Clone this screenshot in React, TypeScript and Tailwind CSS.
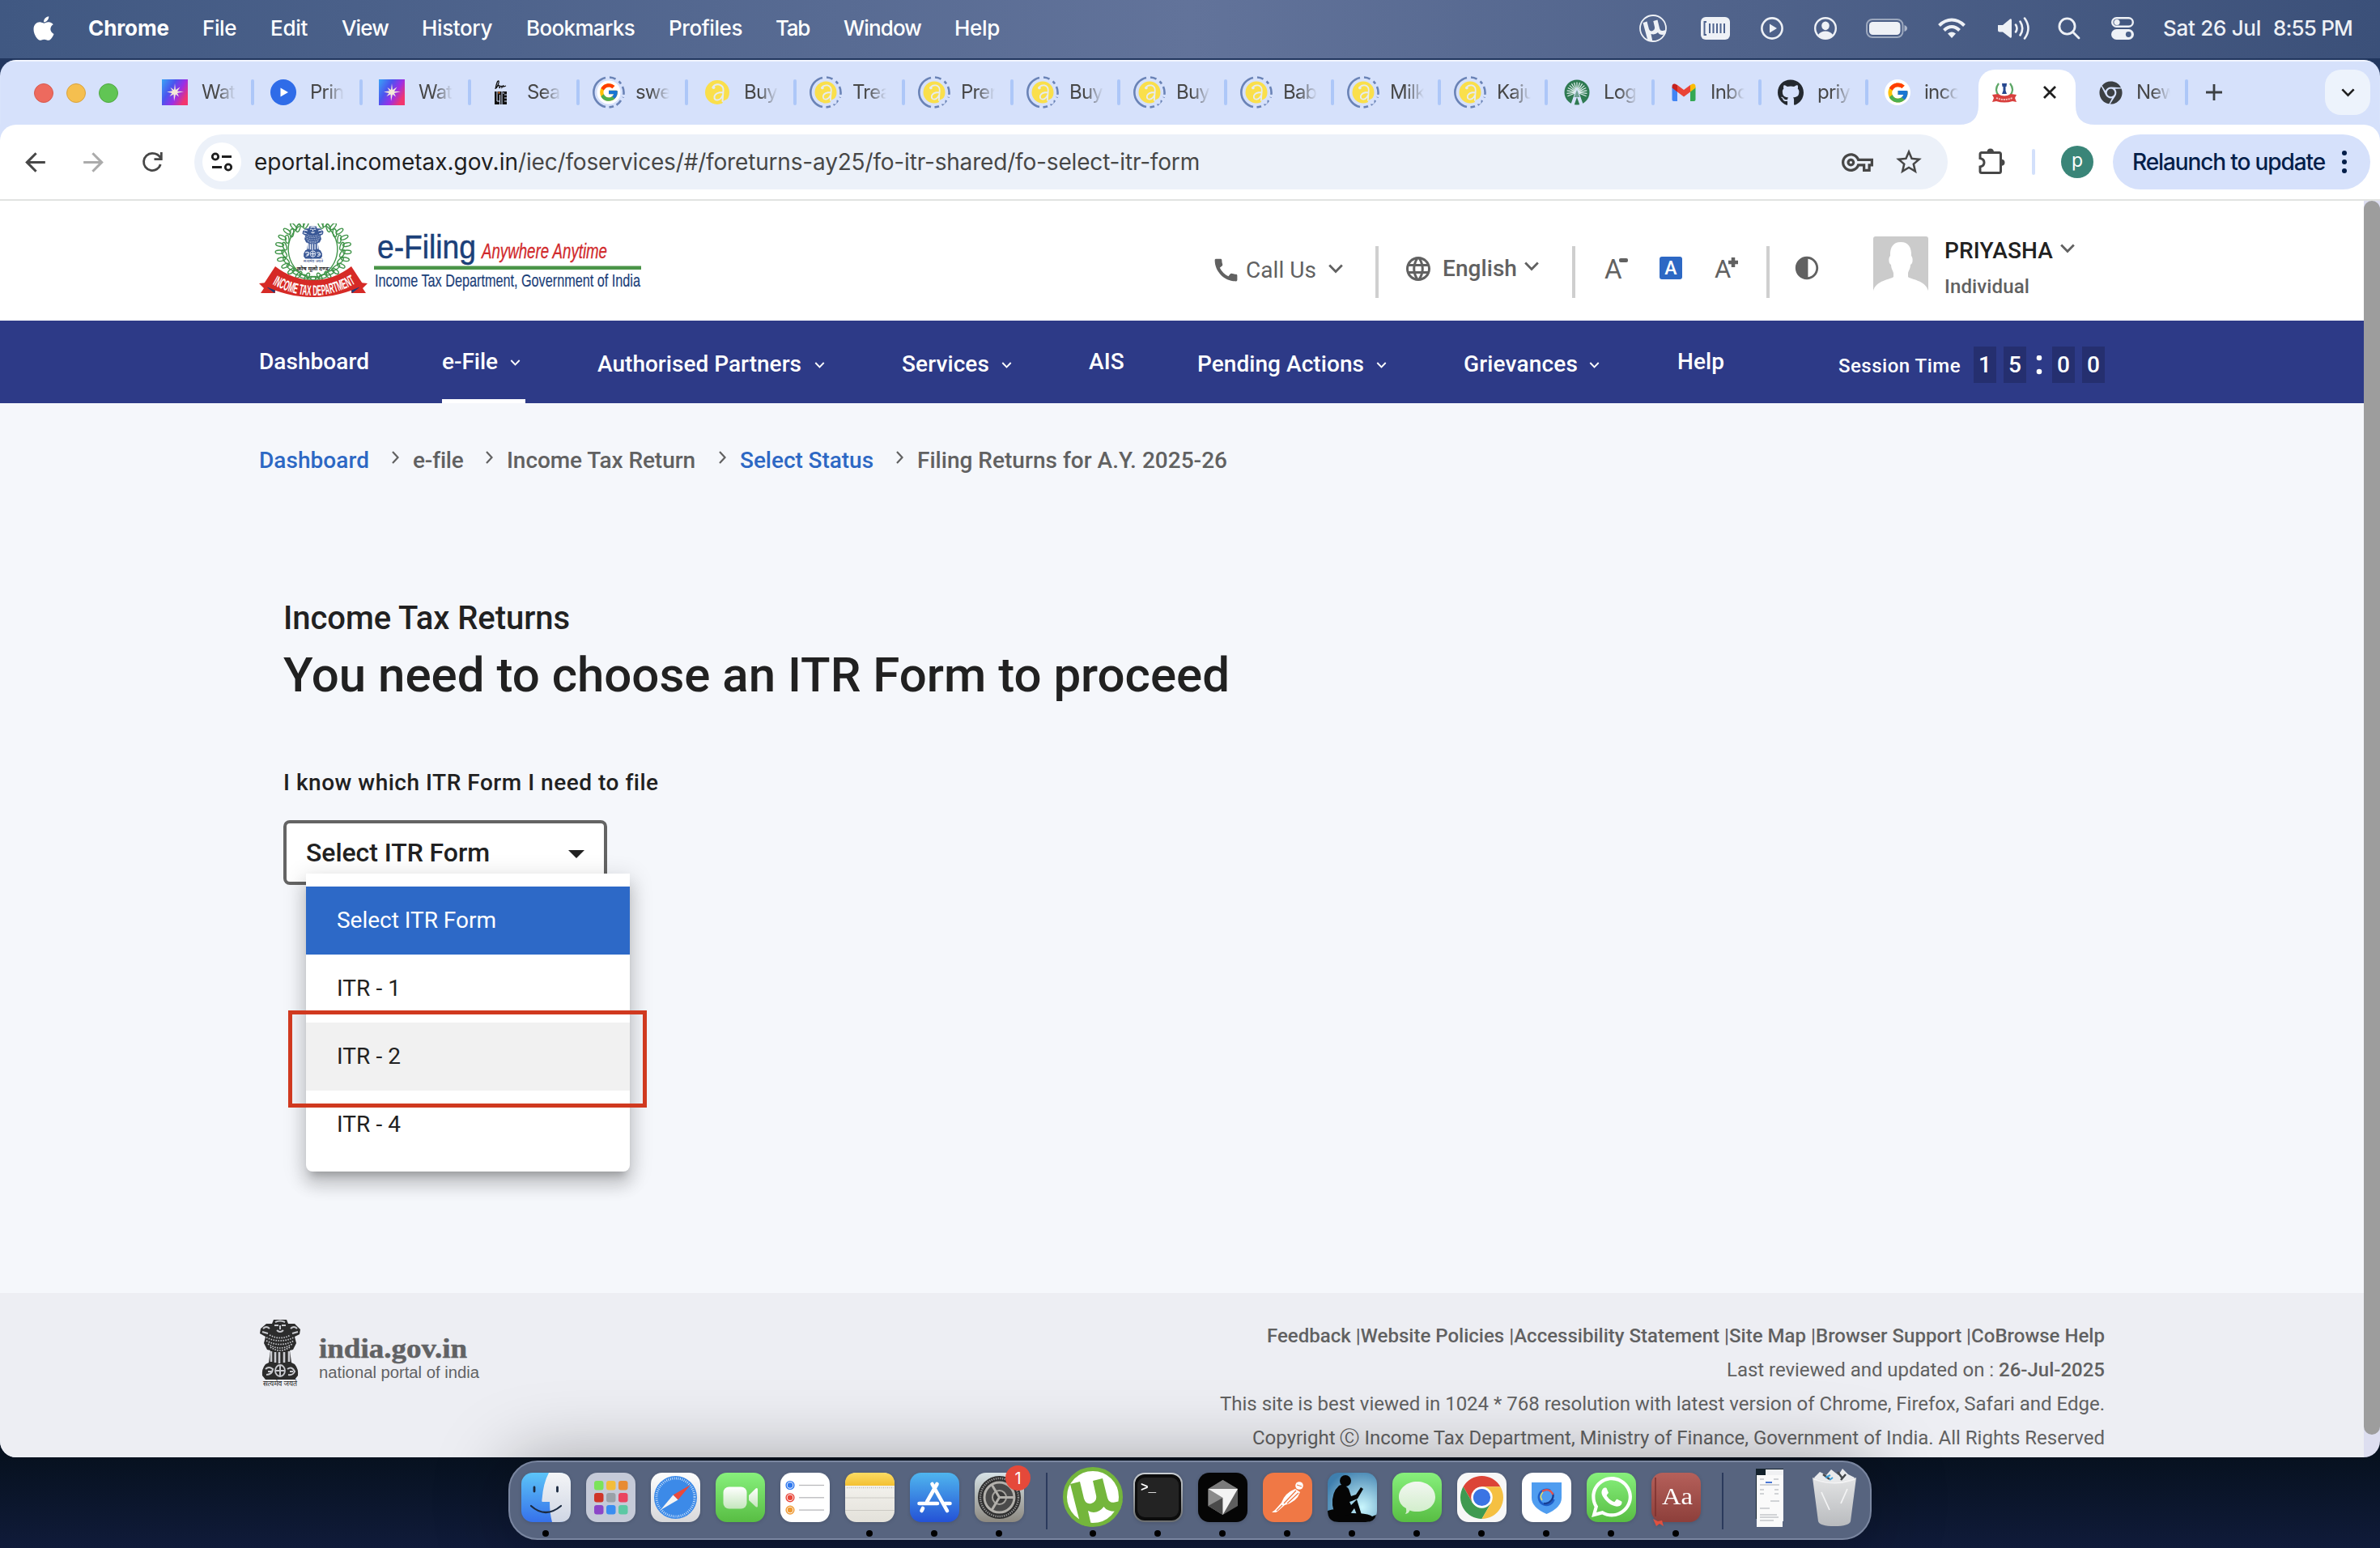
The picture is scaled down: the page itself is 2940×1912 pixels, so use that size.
import { useLayoutEffect, useRef, useState, type ReactNode } from 'react';
import { FaApple, FaChrome, FaGithub, FaWhatsapp } from 'react-icons/fa';
import { FcGoogle } from 'react-icons/fc';
import { MdArrowBack, MdArrowForward, MdCall, MdContrast, MdLanguage, MdOutlineVpnKey, MdStarBorder } from 'react-icons/md';

/** One line of text whose letter spacing is adjusted so that it fills its box. */
function Fit({ children, className = '' }: { children: string; className?: string }) {
  const box = useRef<HTMLSpanElement>(null);
  const inner = useRef<HTMLSpanElement>(null);
  const [spacing, setSpacing] = useState(0);
  useLayoutEffect(() => {
    if (!box.current || !inner.current) return;
    const free = box.current.clientWidth - inner.current.getBoundingClientRect().width;
    setSpacing(free / children.length);
  }, [children]);
  return (
    <span ref={box} className={`block shrink-0 whitespace-pre ${className}`}>
      <span ref={inner} style={{ letterSpacing: `${spacing}px` }}>{children}</span>
    </span>
  );
}

function ChevronDown({ className }: { className: string }) {
  return (
    <svg viewBox="0 0 18 12" className={`shrink-0 ${className}`} fill="none" stroke="currentColor" strokeWidth="2.8">
      <path d="M1.2 1.5 L9 9.5 L16.8 1.5" />
    </svg>
  );
}

/* ---------- macOS menu bar ---------- */

function MenuBar() {
  return (
    <div className="flex h-[72px] shrink-0 items-center bg-linear-to-r from-[#405882] via-[#62739a] to-[#3b5079] pb-[2px] pl-[40px] text-[26px] leading-[32px] text-white">
      <FaApple className="h-[34px] w-[28px] shrink-0" />
      <Fit className="ml-[41px] w-[100px] font-bold">Chrome</Fit>
      <Fit className="ml-[41px] w-[42px] font-medium">File</Fit>
      <Fit className="ml-[42px] w-[46px] font-medium">Edit</Fit>
      <Fit className="ml-[42px] w-[58px] font-medium">View</Fit>
      <Fit className="ml-[41px] w-[87px] font-medium">History</Fit>
      <Fit className="ml-[42px] w-[134px] font-medium">Bookmarks</Fit>
      <Fit className="ml-[42px] w-[91px] font-medium">Profiles</Fit>
      <Fit className="ml-[41px] w-[42px] font-medium">Tab</Fit>
      <Fit className="ml-[42px] w-[96px] font-medium">Window</Fit>
      <Fit className="ml-[41px] w-[56px] font-medium">Help</Fit>
      <div className="ml-auto flex items-center pr-[34px] text-[#eef1f6]">
        <svg viewBox="0 0 34 34" className="h-[34px] w-[34px]">
          <circle cx="17" cy="17" r="16" fill="none" stroke="currentColor" strokeWidth="1.8" />
          <path d="M4.5 10 L9.500 8.600 L12 18 Q13 21 16 20.300 Q19.500 19 19 15.500 L17.300 8 L22.500 6.600 L25.200 17.500 Q26 20.500 29 20 L33 19 L32 24.500 Q25 26 23 22 Q19.500 25.500 14.500 24 L16.500 33.500 L10.500 32 Z" fill="currentColor" />
        </svg>
        <svg viewBox="0 0 36 28" className="ml-[42px] h-[28px] w-[36px]">
          <rect width="36" height="28" rx="6" fill="currentColor" />
          <path d="M7 6 H4.5 V22 H7 M11 8 V20 M15.5 8 V20 M20 8 V20 M24.5 8 V20 M29 8 V20" stroke="#4f648f" strokeWidth="2" fill="none" />
        </svg>
        <svg viewBox="0 0 28 28" className="ml-[38px] h-[28px] w-[28px]">
          <circle cx="14" cy="14" r="12.6" fill="none" stroke="currentColor" strokeWidth="2.6" />
          <path d="M11 8.5 L20 14 L11 19.5 Z" fill="currentColor" />
        </svg>
        <svg viewBox="0 0 28 28" className="ml-[38px] h-[28px] w-[28px]">
          <circle cx="14" cy="14" r="12.8" fill="none" stroke="currentColor" strokeWidth="2.4" />
          <ellipse cx="14" cy="10.8" rx="4.8" ry="5.4" fill="currentColor" />
          <path d="M5 22 Q8 17.5 14 17.5 Q20 17.5 23 22 Q19 26.5 14 26.5 Q9 26.5 5 22" fill="currentColor" />
        </svg>
        <svg viewBox="0 0 51 24" className="ml-[36px] h-[24px] w-[51px]">
          <rect x="1" y="1" width="44.500" height="22" rx="7" fill="none" stroke="currentColor" strokeOpacity=".5" strokeWidth="2" />
          <rect x="4" y="4" width="38.500" height="16" rx="4.500" fill="currentColor" />
          <path d="M47.500 8 Q51 9.500 51 12 Q51 14.500 47.500 16 Z" fill="currentColor" opacity=".6" />
        </svg>
        <svg viewBox="0 0 34 26" className="ml-[38px] h-[26px] w-[34px]" fill="none" stroke="currentColor" strokeWidth="4">
          <path d="M1.500 9.500 Q8.500 2.500 17 2.500 Q25.500 2.500 32.500 9.500" />
          <path d="M7.500 15.500 Q12 11 17 11 Q22 11 26.500 15.500" />
          <path d="M17 25 L12 19.500 Q17 15.500 22 19.500 Z" fill="currentColor" stroke="none" />
        </svg>
        <svg viewBox="0 0 40 28" className="ml-[40px] h-[28px] w-[40px]" fill="none" stroke="currentColor" strokeWidth="2.600" strokeLinecap="round">
          <path d="M0 10 H6 L15 2.500 Q17 1.500 17 4 V24 Q17 26.500 15 25.500 L6 18.500 H2 Q0 18.500 0 16.500 Z" fill="currentColor" stroke="none" />
          <path d="M22 9.500 Q25 14 22 18.500 M27.500 5.500 Q33 14 27.500 22.500 M33 1.500 Q42 14 33 26.500" />
        </svg>
        <svg viewBox="0 0 28 28" className="ml-[34px] h-[28px] w-[28px]" fill="none" stroke="currentColor" strokeWidth="2.800" strokeLinecap="round">
          <circle cx="11.500" cy="11.500" r="9.600" />
          <path d="M18.500 18.500 L26 26" />
        </svg>
        <svg viewBox="0 0 28 28" className="ml-[38px] h-[28px] w-[28px]">
          <rect x="1.200" y="1.200" width="25.600" height="10.600" rx="5.300" fill="none" stroke="currentColor" strokeWidth="2.400" />
          <circle cx="7" cy="6.500" r="3.600" fill="currentColor" />
          <rect y="15" width="28" height="13" rx="6.500" fill="currentColor" />
          <circle cx="21.300" cy="21.500" r="3.400" fill="#4a6089" />
        </svg>
        <Fit className="ml-[36px] w-[121px] font-medium">Sat 26 Jul</Fit>
        <Fit className="ml-[15px] w-[98px] font-medium">8:55 PM</Fit>
      </div>
    </div>
  );
}

/* ---------- Chrome tab strip ---------- */

function Ring({ children }: { children: ReactNode }) {
  return (
    <svg viewBox="0 0 40 40" className="-m-[4px] h-[40px] w-[40px] max-w-none shrink-0">
      <g fill="none" stroke="#6a83b6" strokeWidth="2.600">
        <path d="M16 1.900 A18.500 18.500 0 0 0 16 38.100" />
        <path d="M21 1.500 A18.500 18.500 0 0 1 28.500 3.600" />
        <path d="M32.500 6.500 A18.500 18.500 0 0 1 35 9.500" />
        <path d="M37 13 A18.500 18.500 0 0 1 37.500 26.500" strokeDasharray="10 3 20" />
        <path d="M35 30 A18.500 18.500 0 0 1 29.500 35.700" />
        <path d="M26 37.200 A18.500 18.500 0 0 1 20.500 38.400" />
      </g>
      {children}
    </svg>
  );
}

function Amul({ ringed }: { ringed?: boolean }) {
  const glyph = (
    <>
      <circle cx="20" cy="20" r="15" fill="#fadf4b" />
      <path d="M14.500 14 Q17 9.500 22.500 10.500 Q28 12 27.500 18 L26.500 31 M27 20 Q18 20 16.500 25 Q16 30 20.500 29.500 Q24.500 29 26.500 24" fill="none" stroke="#e6ebf0" strokeWidth="2" strokeLinecap="round" />
      <circle cx="15.500" cy="14" r="2" fill="#e6ebf0" />
      <path d="M27 31 L35 27 V36 H26 Z" fill="#d6e1fb" />
    </>
  );
  return ringed ? <Ring><g transform="translate(2 2) scale(.9)">{glyph}</g></Ring> : <svg viewBox="4 4 32 32" className="h-[32px] w-[32px] shrink-0">{glyph}</svg>;
}

function StarTile() {
  return (
    <svg viewBox="0 0 32 32" className="h-[32px] w-[32px] shrink-0">
      <defs>
        <linearGradient id="tile" x1="0" y1="0" x2="1" y2=".6">
          <stop offset="0" stopColor="#3aa5f5" /><stop offset=".4" stopColor="#4a55ee" /><stop offset=".7" stopColor="#9a2fe6" /><stop offset="1" stopColor="#f2356e" />
        </linearGradient>
      </defs>
      <rect width="32" height="32" fill="url(#tile)" />
      <path d="M16 5 L17 13 L22.500 9.500 L19 14.700 L27 15 L19 17 L21 21.500 L17 18.500 L15 27 L14.500 18.500 L9.500 21 L12.500 17 L6 15.500 L13 14.300 L10.500 10 L15 13 Z" fill="#f4ead8" />
    </svg>
  );
}

function PlayDot() {
  return (
    <svg viewBox="0 0 32 32" className="h-[32px] w-[32px] shrink-0">
      <circle cx="16" cy="16" r="16" fill="#2f6ce8" />
      <path d="M12.500 10.500 L22 16 L12.500 21.500 Z" fill="#fff" />
    </svg>
  );
}

function LifeMark() {
  return (
    <svg viewBox="0 0 32 32" className="h-[32px] w-[32px] shrink-0" fill="none" stroke="#111">
      <path d="M10 12 Q12 1 14 2 Q15 4 11 11 Q14 6 15 8 L15 11 Q17 6 18 10 Q20 6 20 9 L23 8" strokeWidth="1.300" />
      <rect x="9" y="15" width="15" height="16" fill="#111" stroke="none" />
      <path d="M12 15 V27 H15 M15.500 19 V31 M19 17 H21 M18 15 V31 M21 19 H24 M21 23 H24 M21 27 H24" stroke="#d6e1fb" strokeWidth="1" />
      <path d="M13.500 16.500 H15.500" stroke="#f47b20" strokeWidth="2" />
    </svg>
  );
}

function GreenSeal() {
  return (
    <svg viewBox="0 0 32 32" className="h-[32px] w-[32px] shrink-0">
      <circle cx="16" cy="16" r="15.500" fill="#2f7a52" />
      {Array.from({ length: 15 }, (_, i) => (
        <path key={i} d="M16 14 L16 3.500" stroke="#e4f0f0" strokeWidth="1.200" transform={`rotate(${-112 + i * 16} 16 16)`} />
      ))}
      <path d="M16 9 L24 32 H19.500 L16 22 L12.500 32 H8 Z" fill="#d6e1fb" />
      <path d="M16 13 L12.500 22 H19.500 Z" fill="#2f7a52" opacity=".6" />
    </svg>
  );
}

function Gmail() {
  return (
    <svg viewBox="0 0 32 32" className="h-[32px] w-[32px] shrink-0">
      <path d="M1.500 10 L8 14.500 V27 H3.500 Q1.500 27 1.500 25 Z" fill="#4285f4" />
      <path d="M30.500 10 L24 14.500 V27 H28.500 Q30.500 27 30.500 25 Z" fill="#34a853" />
      <path d="M24 7 L27 5.500 Q30.500 5 30.500 9 V10.500 L24 15.500 Z" fill="#fbbc04" />
      <path d="M8 7 L16 13 L24 7 V15.500 L16 21.500 L8 15.500 Z" fill="#ea4335" />
      <path d="M8 7 L5 5.500 Q1.500 5 1.500 9 V10.500 L8 15.500 Z" fill="#c5221f" />
    </svg>
  );
}

function GoogleDisc() {
  return (
    <span className="flex h-[32px] w-[32px] shrink-0 items-center justify-center rounded-full bg-white">
      <FcGoogle className="h-[29px] w-[29px]" />
    </span>
  );
}

function TabItem({ icon, label, narrow }: { icon: ReactNode; label: string; narrow?: boolean }) {
  return (
    <div className={`flex h-[32px] shrink-0 items-center ${narrow ? 'w-[132px]' : 'w-[134px]'}`}>
      {icon}
      <span className="ml-[17px] w-[42px] shrink-0 overflow-hidden whitespace-nowrap mask-r-from-45% mask-r-to-100% text-[24px] leading-[32px] tracking-[-0.8px] text-[#474747]">{label}</span>
      <span className={`h-[32px] w-[4px] shrink-0 rounded-full bg-[#adc7f8] ${narrow ? 'ml-[17px]' : 'ml-[19px]'}`} />
    </div>
  );
}

function MiniSeal() {
  return (
    <svg viewBox="0 0 32 32" className="h-[32px] w-[32px] shrink-0">
      <path d="M9 5 Q3 13 9 20 Q16 25 23 20 Q29 13 23 5" fill="none" stroke="#5da767" strokeWidth="2.200" />
      <path d="M13 5 H19 L18.500 9 H17.500 V14 L19 18 H13 L14.500 14 V9 H13.500 Z" fill="#27488f" />
      <path d="M1 19 L8 18 Q16 23 24 18 L31 19 L29 23 L31 28 L26 27 Q16 30 6 27 L1 28 L3 23 Z" fill="#d8403e" />
      <path d="M6 23 Q16 27 26 23" stroke="#f6c8c5" strokeWidth="1.800" strokeDasharray="2 1" fill="none" />
    </svg>
  );
}

function TabStrip() {
  return (
    <div className="flex h-[80px] shrink-0 items-start bg-[#d6e1fb] pl-[42px] shadow-[inset_0_2px_1px_rgba(255,255,255,0.7)]">
      <div className="mt-[29px] flex gap-[16px]">
        <span className="h-[24px] w-[24px] rounded-full border border-[#d75a4e] bg-[#ed6a5e]" />
        <span className="h-[24px] w-[24px] rounded-full border border-[#d9a33e] bg-[#f5bf4f]" />
        <span className="h-[24px] w-[24px] rounded-full border border-[#51a841] bg-[#61c554]" />
      </div>
      <div className="mt-[24px] ml-[54px] flex w-[2220px] shrink-0">
        <TabItem icon={<StarTile />} label="Wat" />
        <TabItem icon={<PlayDot />} label="Prin" />
        <TabItem icon={<StarTile />} label="Wat" />
        <TabItem icon={<LifeMark />} label="Sea" />
        <TabItem
          icon={<Ring><circle cx="20" cy="20" r="14.500" fill="#fff" /><g transform="translate(7 7)"><FcGoogle size={26} /></g></Ring>}
          label="swe"
        />
        <TabItem icon={<Amul />} label="Buy" />
        <TabItem icon={<Amul ringed />} label="Trea" />
        <TabItem icon={<Amul ringed />} label="Pren" />
        <TabItem narrow icon={<Amul ringed />} label="Buy" />
        <TabItem narrow icon={<Amul ringed />} label="Buy" />
        <TabItem narrow icon={<Amul ringed />} label="Bab" />
        <TabItem narrow icon={<Amul ringed />} label="Milk" />
        <TabItem narrow icon={<Amul ringed />} label="Kaju" />
        <TabItem narrow icon={<GreenSeal />} label="Log" />
        <TabItem narrow icon={<Gmail />} label="Inbo" />
        <TabItem narrow icon={<FaGithub className="h-[33px] w-[32px] shrink-0 text-[#24292f]" />} label="priy" />
        <div className="w-[108px] shrink-0 overflow-hidden"><TabItem narrow icon={<GoogleDisc />} label="inco" /></div>
      </div>
      <svg viewBox="0 0 24 24" className="mt-[56px] h-[24px] w-[24px] shrink-0" fill="#fff"><path d="M24 0 Q24 24 0 24 H24 Z" /></svg>
      <div className="mt-[12px] flex h-[68px] w-[120px] shrink-0 items-start rounded-t-[20px] bg-white pt-[12px] pl-[16px]">
        <MiniSeal />
        <svg viewBox="0 0 16 16" className="mt-[8px] ml-[32px] h-[16px] w-[16px]" stroke="#1f1f1f" strokeWidth="2.800"><path d="M1 1 L15 15 M15 1 L1 15" /></svg>
      </div>
      <svg viewBox="0 0 24 24" className="mt-[56px] h-[24px] w-[24px] shrink-0" fill="#fff"><path d="M0 0 Q0 24 24 24 H0 Z" /></svg>
      <div className="mt-[24px] ml-[5px] flex h-[32px] items-center">
        <FaChrome className="h-[29px] w-[29px] shrink-0 text-[#3c4043]" />
        <span className="ml-[17px] w-[42px] shrink-0 overflow-hidden whitespace-nowrap mask-r-from-45% mask-r-to-100% text-[24px] leading-[32px] tracking-[-0.8px] text-[#474747]">New</span>
        <span className="ml-[18px] h-[32px] w-[4px] rounded-full bg-[#adc7f8]" />
        <svg viewBox="0 0 20 20" className="ml-[22px] h-[20px] w-[20px]" stroke="#3c4043" strokeWidth="2.800"><path d="M10 0 V20 M0 10 H20" /></svg>
      </div>
      <div className="mt-[12px] ml-auto mr-[12px] flex h-[56px] w-[56px] shrink-0 items-center justify-center rounded-[20px] bg-[#edf3fc] text-[#1f1f1f]">
        <ChevronDown className="h-[11px] w-[17px]" />
      </div>
    </div>
  );
}

function Toolbar() {
  return (
    <div className="shrink-0 bg-[#d6e1fb]">
      <div className="flex h-[94px] items-center rounded-t-[20px] border-b-2 border-[#e1e3e1] bg-white pl-[25px] text-[#474747]">
        <MdArrowBack className="h-[37px] w-[37px] shrink-0" />
        <MdArrowForward className="ml-[35px] h-[37px] w-[37px] shrink-0 text-[#ababab]" />
        <svg viewBox="0 0 26 26" className="ml-[41px] h-[26px] w-[26px] shrink-0" fill="none" stroke="currentColor" strokeWidth="2.800">
          <path d="M24 9 Q20.500 2.400 13 2.400 A10.600 10.600 0 1 0 23.300 16" />
          <path d="M24.300 1 V9.600 H15.500" />
        </svg>
        <div className="ml-[39px] flex h-[68px] w-[2166px] shrink-0 items-center rounded-full bg-[#ecf1f9] pl-[10px] text-[28px] leading-[34px]">
          <span className="flex h-[48px] w-[48px] items-center justify-center rounded-full bg-white">
            <svg viewBox="0 0 26 24" className="h-[24px] w-[26px]" fill="none" stroke="#1f1f1f" strokeWidth="2.800">
              <circle cx="5" cy="5.500" r="3.700" /><path d="M13 5.500 H25" /><circle cx="21" cy="18.500" r="3.700" /><path d="M1 18.500 H13" />
            </svg>
          </span>
          <Fit className="ml-[16px] w-[326px] text-[#1f1f1f]">eportal.incometax.gov.in</Fit>
          <Fit className="w-[842px]">/iec/foservices/#/foreturns-ay25/fo-itr-shared/fo-select-itr-form</Fit>
          <MdOutlineVpnKey className="ml-[793px] h-[39px] w-[39px] shrink-0" />
          <MdStarBorder className="ml-[25px] h-[38px] w-[38px] shrink-0" />
        </div>
        <svg viewBox="0 0 36 36" className="ml-[37px] h-[36px] w-[36px] shrink-0">
          <path d="M4 6.500 H26.500 Q28.500 6.500 28.500 8.500 V29.500 Q28.500 31.500 26.500 31.500 H5 Q3 31.500 3 29.500 V24 Q8 23 8 18.800 Q8 14.500 3 13.500 V8.500 Q3 6.500 5 6.500" fill="none" stroke="currentColor" strokeWidth="3" />
          <path d="M11.500 6 Q11.500 1.500 15.700 1.500 Q20 1.500 20 6 Z M29 14.500 Q33.500 15 33.500 18.800 Q33.500 22.500 29 23 Z" fill="currentColor" />
        </svg>
        <span className="ml-[31px] h-[32px] w-[4px] shrink-0 rounded-full bg-[#d3e0fb]" />
        <span className="ml-[32px] flex h-[40px] w-[40px] shrink-0 items-center justify-center rounded-full bg-[#3a8578] pb-[3px] text-[23px] text-white">p</span>
        <div className="ml-[24px] flex h-[68px] w-[318px] shrink-0 items-center rounded-full bg-[#d6e1fb] pl-[24px] text-[28px] leading-[34px] text-[#041e49]">
          <Fit className="w-[238px] font-medium">Relaunch to update</Fit>
          <svg viewBox="0 0 6 30" className="ml-[21px] h-[30px] w-[6px]" fill="#041e49"><circle cx="3" cy="4" r="3" /><circle cx="3" cy="15" r="3" /><circle cx="3" cy="26" r="3" /></svg>
        </div>
      </div>
    </div>
  );
}

/* ---------- Portal header ---------- */

/** Lion capital, drawn in a 52 by 86 box. */
function LionCapital({ dark, light }: { dark: string; light: string }) {
  return (
    <g>
      <path d="M18 1 H34 L36 6 L44 6 L51 13 L50 19 L44 22 L46 30 L42 38 L38 39 L40 54 L44 56 Q49 62 48 70 L44 75 H8 L4 70 Q3 62 8 56 L12 54 L14 39 L10 38 L6 30 L8 22 L1 18 L2 12 L9 6 L16 6 Z" fill={dark} />
      <g stroke={light} fill="none">
        <path d="M20 4 Q26 1 32 4 M19 8 H24 M28 8 H33 M26 8 V13 M22 14 Q26 18 30 14 M5 12 Q9 8 13 12 M39 12 Q43 8 47 12 M4 16 L11 18 M41 18 L48 16" strokeWidth="2" />
        <path d="M9 23 Q26 31 43 23 M9 27 Q26 36 43 27 M11 31 Q26 41 41 31 M14 35 Q26 43 38 35 M13 20 Q26 27 39 20" strokeWidth="1.700" strokeDasharray="1.500 1.500" />
        <path d="M15 40 V53 M20 41 V54 M25 41 V55 M31 41 V54 M37 40 V53" strokeWidth="2.600" />
        <ellipse cx="26" cy="64" rx="6" ry="7" strokeWidth="1.800" />
        <path d="M26 58 V70 M21 64 H31 M8 62 Q12 58 17 62 Q16 69 9 69 M35 62 Q41 58 44 65 Q42 70 36 69 M11 65 H15 M38 65 H42" strokeWidth="2" />
      </g>
    </g>
  );
}

function PortalLogo() {
  const leaves = Array.from({ length: 11 }, (_, i) => i);
  return (
    <svg viewBox="0 0 480 96" className="mt-[28px] h-[96px] w-[480px] shrink-0">
      <defs><path id="ribbon" d="M13 73 Q67 105 121 73" /></defs>
      <g fill="none" stroke="#3f9448" strokeWidth="1.400">
        <path d="M50 3 A40 38 0 0 0 64 68 M83 3 A40 38 0 0 1 69 68" />
        {leaves.map((i) => {
          const a = ((108 + i * 15.5) * Math.PI) / 180;
          const r = 39;
          const y = 32 - Math.sin(a) * (r - 5);
          const dx = Math.cos(a) * r;
          return (
            <g key={i}>
              <ellipse cx={67 + dx - 3} cy={y} rx="2.200" ry="5" transform={`rotate(${-30 - i * 12} ${67 + dx - 3} ${y})`} />
              <ellipse cx={67 + dx + 3} cy={y + 2} rx="2.200" ry="5" transform={`rotate(${30 - i * 12} ${67 + dx + 3} ${y + 2})`} />
              <ellipse cx={67 - dx + 3} cy={y} rx="2.200" ry="5" transform={`rotate(${30 + i * 12} ${67 - dx + 3} ${y})`} />
              <ellipse cx={67 - dx - 3} cy={y + 2} rx="2.200" ry="5" transform={`rotate(${-30 + i * 12} ${67 - dx - 3} ${y + 2})`} />
            </g>
          );
        })}
      </g>
      <g transform="translate(53 3) scale(.52 .54)"><LionCapital dark="#3a5896" light="#eef2fa" /></g>
      <text x="67" y="48" fontSize="5" textAnchor="middle" fill="#1f3f7f" className="font-['Noto_Sans']">सत्यमेव जयते</text>
      <text x="67" y="58" fontSize="7" fontWeight="700" textAnchor="middle" fill="#222" className="font-['Noto_Sans']">कोष मूलो दण्ड:</text>
      <path d="M0 74 L20 72 V86 L2 86 L6 80 Z M134 74 L114 72 V86 L132 86 L128 80 Z" fill="#d62a26" />
      <path d="M10 79 L22 74 L19 86 Z M124 79 L112 74 L115 86 Z" fill="#1d3d7a" />
      <path d="M20 53 Q42 70 67 70 Q92 70 114 53 L129 76 Q100 91 67 91 Q34 91 5 76 Z" fill="#d62a26" />
      <text fontSize="18" fontWeight="700" fill="#fff" className="font-['Liberation_Sans']">
        <textPath href="#ribbon" textLength="108" lengthAdjust="spacingAndGlyphs" startOffset="4">INCOME TAX DEPARTMENT</textPath>
      </text>
      <g className="font-['Liberation_Sans']">
        <text x="146" y="43" fontSize="40" fill="#1b4079" stroke="#1b4079" strokeWidth=".5" textLength="122" lengthAdjust="spacingAndGlyphs">e-Filing</text>
        <text x="275" y="43" fontSize="25" fontStyle="italic" fill="#d12a2c" stroke="#d12a2c" strokeWidth=".3" textLength="155" lengthAdjust="spacingAndGlyphs">Anywhere Anytime</text>
        <rect x="142" y="52.500" width="330" height="4.500" fill="#4a9448" />
        <text x="143" y="77.500" fontSize="21.500" fill="#1b4079" stroke="#1b4079" strokeWidth=".2" textLength="328" lengthAdjust="spacingAndGlyphs">Income Tax Department, Government of India</text>
      </g>
    </svg>
  );
}

function PortalHeader() {
  return (
    <div className="flex h-[148px] shrink-0 items-start bg-white pl-[320px] text-[28px] leading-[34px] text-[#616161]">
      <PortalLogo />
      <MdCall className="mt-[67px] ml-[696px] h-[37px] w-[37px] shrink-0" />
      <Fit className="mt-[69px] ml-[6px] w-[87px]">Call Us</Fit>
      <ChevronDown className="mt-[78px] ml-[15px] h-[12px] w-[18px]" />
      <span className="mt-[56px] ml-[40px] h-[64px] w-[4px] shrink-0 bg-[#cfcfcf]" />
      <MdLanguage className="mt-[66px] ml-[31px] h-[36px] w-[36px] shrink-0" />
      <Fit className="mt-[67px] ml-[12px] w-[92px] font-medium">English</Fit>
      <ChevronDown className="mt-[75px] ml-[9px] h-[12px] w-[18px]" />
      <span className="mt-[56px] ml-[41px] h-[64px] w-[4px] shrink-0 bg-[#cfcfcf]" />
      <span className="mt-[66px] ml-[36px] flex w-[30px] shrink-0 items-start">
        <span className="text-[33px] leading-[38px]">A</span>
        <span className="mt-[5px] -ml-[4px] h-[5px] w-[11px] shrink-0 rounded-[2px] bg-[#616161]" />
      </span>
      <span className="mt-[69px] ml-[38px] flex h-[28px] w-[28px] shrink-0 items-center justify-center rounded-[3px] bg-[#2d68c4] text-[23px] leading-none font-medium text-white">A</span>
      <span className="mt-[66px] ml-[40px] flex w-[30px] shrink-0 items-start">
        <span className="text-[31px] leading-[38px]">A</span>
        <svg viewBox="0 0 12 12" className="mt-[4px] -ml-[3px] h-[12px] w-[12px] shrink-0" stroke="#616161" strokeWidth="4.500"><path d="M6 0 V12 M0 6 H12" /></svg>
      </span>
      <span className="mt-[56px] ml-[34px] h-[64px] w-[4px] shrink-0 bg-[#cfcfcf]" />
      <MdContrast className="mt-[66px] ml-[29px] h-[34px] w-[34px] shrink-0" />
      <svg viewBox="0 0 68 68" className="mt-[44px] ml-[65px] h-[68px] w-[68px] shrink-0">
        <rect width="68" height="68" rx="3" fill="#cbcbcb" />
        <path d="M34 7 C43 7 47.500 13 47 24 C48 25 49 27 48.500 31 C48 34 47 34 46 35 C46 40 43 43 43 46 V50 C45 53 66 54 68 68 H0 C2 54 23 53 25 50 V46 C25 43 22 40 22 35 C21 34 20 34 19.500 31 C19 27 20 25 21 24 C20.500 13 25 7 34 7 Z" fill="#fff" />
      </svg>
      <div className="mt-[45px] ml-[20px] flex flex-col">
        <div className="flex items-start">
          <Fit className="w-[134px] font-medium text-[#212121]">PRIYASHA</Fit>
          <ChevronDown className="mt-[8px] ml-[9px] h-[12px] w-[18px]" />
        </div>
        <Fit className="mt-[10px] w-[105px] text-[24px] font-medium">Individual</Fit>
      </div>
    </div>
  );
}

function NavArrow({ className }: { className: string }) {
  return <ChevronDown className={`h-[8px] w-[13px] ${className}`} />;
}

function Digit({ children, className = '' }: { children: string; className?: string }) {
  return <span className={`mt-[32px] flex h-[45px] w-[28px] shrink-0 items-center justify-center bg-[#252f6f] ${className}`}>{children}</span>;
}

function NavBar() {
  return (
    <div className="flex h-[102px] shrink-0 items-start bg-[#2d3a87] pl-[320px] text-[28px] leading-[34px] font-medium text-white">
      <Fit className="mt-[34px] w-[136px]">Dashboard</Fit>
      <div className="ml-[90px] flex h-[102px] w-[103px] shrink-0 items-start border-b-[5px] border-white">
        <Fit className="mt-[34px] w-[69px]">e-File</Fit>
        <NavArrow className="mt-[48px] ml-[15px]" />
      </div>
      <Fit className="mt-[37px] ml-[89px] w-[252px]">Authorised Partners</Fit>
      <NavArrow className="mt-[51px] ml-[16px]" />
      <Fit className="mt-[37px] ml-[95px] w-[108px]">Services</Fit>
      <NavArrow className="mt-[51px] ml-[15px]" />
      <Fit className="mt-[34px] ml-[95px] w-[44px]">AIS</Fit>
      <Fit className="mt-[37px] ml-[90px] w-[206px]">Pending Actions</Fit>
      <NavArrow className="mt-[51px] ml-[15px]" />
      <Fit className="mt-[37px] ml-[95px] w-[141px]">Grievances</Fit>
      <NavArrow className="mt-[51px] ml-[14px]" />
      <Fit className="mt-[34px] ml-[96px] w-[58px]">Help</Fit>
      <Fit className="mt-[39px] ml-[141px] w-[151px] text-[24px]">Session Time</Fit>
      <Digit className="ml-[16px]">1</Digit>
      <Digit className="ml-[9px]">5</Digit>
      <svg viewBox="0 0 8 24" className="mt-[43px] ml-[12px] h-[24px] w-[8px] shrink-0" fill="#fff"><circle cx="4" cy="3" r="3.300" /><circle cx="4" cy="20" r="3.300" /></svg>
      <Digit className="ml-[12px]">0</Digit>
      <Digit className="ml-[9px]">0</Digit>
    </div>
  );
}

function Crumb() {
  return <svg viewBox="0 0 9 16" className="mt-[5px] h-[16px] w-[9px] shrink-0" fill="none" stroke="#616161" strokeWidth="2.200"><path d="M1 1 L7.500 8 L1 15" /></svg>;
}

function Breadcrumbs() {
  return (
    <div className="flex h-[34px] items-start text-[28px] leading-[34px] font-medium text-[#616161]">
      <Fit className="w-[136px] text-[#2d68c4]">Dashboard</Fit>
      <span className="w-[28px] shrink-0" /><Crumb />
      <Fit className="ml-[17px] w-[62px]">e-file</Fit>
      <span className="w-[28px] shrink-0" /><Crumb />
      <Fit className="ml-[17px] w-[233px]">Income Tax Return</Fit>
      <span className="w-[29px] shrink-0" /><Crumb />
      <Fit className="ml-[17px] w-[165px] text-[#2d68c4]">Select Status</Fit>
      <span className="w-[28px] shrink-0" /><Crumb />
      <Fit className="ml-[17px] w-[383px]">Filing Returns for A.Y. 2025-26</Fit>
    </div>
  );
}

/* ---------- ITR form picker ---------- */

const options = ['Select ITR Form', 'ITR - 1', 'ITR - 2', 'ITR - 4'];
const optionWidths = ['w-[197px]', 'w-[79px]', 'w-[79px]', 'w-[79px]'];
const optionTones = ['bg-[#2d69c7] text-white', 'bg-white', 'bg-[#f1f1f1]', 'bg-white'];

function FormSelect() {
  return (
    <div className="relative mt-[19px] w-[400px]">
      <div className="flex h-[80px] items-center rounded-[8px] border-[4px] border-[#646464] bg-white pl-[24px] text-[32px] leading-[38px] font-medium text-[#212121]">
        <Fit className="w-[227px]">Select ITR Form</Fit>
        <svg viewBox="0 0 20 10" className="mt-[3px] ml-[97px] h-[10px] w-[20px] shrink-0" fill="#212121"><path d="M0 0 H20 L10 10 Z" /></svg>
      </div>
      <div className="absolute top-[66px] left-[28px] w-[400px] rounded-b-[8px] bg-white py-[16px] text-[28px] leading-[84px] text-[#212121] shadow-[0_10px_10px_-6px_rgba(0,0,0,0.2),0_16px_20px_2px_rgba(0,0,0,0.14),0_6px_28px_4px_rgba(0,0,0,0.12)]">
        {options.map((option, i) => (
          <div key={option} className={`flex h-[84px] pl-[38px] ${optionTones[i]}`}>
            <Fit className={optionWidths[i]}>{option}</Fit>
          </div>
        ))}
      </div>
      <div className="absolute top-[235px] left-[6px] h-[120px] w-[443px] border-[5px] border-[#d0391f]" />
    </div>
  );
}

function Footer() {
  return (
    <div className="flex h-[203px] shrink-0 items-start justify-between bg-[#edeef3] pr-[320px] pl-[320px] text-[#616161]">
      <div className="mt-[32px] flex items-start">
        <svg viewBox="0 0 52 86" className="h-[86px] w-[52px]">
          <LionCapital dark="#2c2c2c" light="#c9cacf" />
          <text x="26" y="83" fontSize="9" textAnchor="middle" textLength="42" lengthAdjust="spacingAndGlyphs" fill="#222" className="font-['Noto_Sans']">सत्यमेव जयते</text>
        </svg>
        <svg viewBox="0 0 204 60" className="mt-[20px] ml-[21px] h-[60px] w-[204px]" fill="#616264">
          <text x="1" y="27.500" fontSize="33" fontWeight="700" stroke="#616264" strokeWidth=".5" textLength="183" lengthAdjust="spacingAndGlyphs" className="font-['Liberation_Serif']">india.gov.in</text>
          <text x="1" y="53" fontSize="20" textLength="198" lengthAdjust="spacingAndGlyphs" className="font-['Liberation_Sans']">national portal of india</text>
        </svg>
      </div>
      <div className="mt-[32px] flex flex-col items-end text-[24px] leading-[42px]">
        <Fit className="w-[1035px] font-medium">Feedback |Website Policies |Accessibility Statement |Site Map |Browser Support |CoBrowse Help</Fit>
        <div className="flex"><Fit className="w-[336px]">Last reviewed and updated on : </Fit><Fit className="w-[131px] font-medium">26-Jul-2025</Fit></div>
        <Fit className="w-[1093px]">This site is best viewed in 1024 * 768 resolution with latest version of Chrome, Firefox, Safari and Edge.</Fit>
        <Fit className="w-[1053px]">Copyright Ⓒ Income Tax Department, Ministry of Finance, Government of India. All Rights Reserved</Fit>
      </div>
    </div>
  );
}

function Portal() {
  return (
    <div className="flex h-[1552px] shrink-0 bg-[#dddef0]">
      <div className="flex w-[2920px] shrink-0 flex-col font-['Roboto',sans-serif]">
        <PortalHeader />
        <NavBar />
        <div className="flex h-[1099px] shrink-0 flex-col bg-[#f5f7fb] pt-[54px] pl-[320px]">
          <Breadcrumbs />
          <div className="mt-[154px] pl-[30px] text-[#212121]">
            <Fit className="w-[354px] text-[40px] leading-[48px] font-medium">Income Tax Returns</Fit>
            <Fit className="mt-[10px] w-[1169px] text-[60px] leading-[72px] font-medium">You need to choose an ITR Form to proceed</Fit>
            <Fit className="mt-[79px] w-[463px] text-[28px] leading-[36px] font-medium">I know which ITR Form I need to file</Fit>
            <div className="pt-[9px]"><FormSelect /></div>
          </div>
        </div>
        <Footer />
      </div>
      <div className="h-[1524px] w-[20px] rounded-full bg-[#9d9d9d]" />
    </div>
  );
}

/* ---------- Dock ---------- */

function App61({ children, open, fill = '#fff', badge }: { children?: ReactNode; open?: boolean; fill?: string; badge?: string }) {
  return (
    <div className="relative flex w-[80px] shrink-0 flex-col items-center">
      <svg viewBox="0 0 61 61" className="h-[61px] w-[61px] overflow-visible drop-shadow-sm">
        <rect width="61" height="61" rx="14" fill={fill} />
        {children}
      </svg>
      {open && <span className="mt-[10px] h-[8px] w-[8px] rounded-full bg-black" />}
      {badge && <span className="absolute -top-[9px] left-[48px] flex h-[31px] w-[31px] items-center justify-center rounded-full bg-[#e5493a] text-[20px] leading-none text-white">{badge}</span>}
    </div>
  );
}

const pads = ['#7be35a', '#f3bd3b', '#e88b33', '#cf3528', '#9aa1a8', '#ea4560', '#8c46c8', '#3a8df0', '#5cc8a4'];

function Gradient({ id, from, to }: { id: string; from: string; to: string }) {
  return <linearGradient id={id} x1="0" y1="0" x2="0" y2="1"><stop offset="0" stopColor={from} /><stop offset="1" stopColor={to} /></linearGradient>;
}

function DockDivider({ className }: { className: string }) {
  return <span className={`h-[70px] w-[2px] shrink-0 bg-[#2b3a5c] ${className}`} />;
}

function Dock() {
  return (
    <div className="relative z-10 mx-auto mt-[4px] flex h-[98px] w-[1684px] shrink-0 items-start rounded-[36px] border-2 border-[#7a86a0] bg-[#57647f] pt-[13px] pl-[4px] shadow-[0_0_90px_0_rgba(0,0,0,0.34)]">
      <svg className="absolute h-0 w-0">
        <defs>
          <Gradient id="finder" from="#5cc4f8" to="#3671ea" />
          <Gradient id="finderLight" from="#f4f5f7" to="#cfd6e4" />
          <Gradient id="safari" from="#fdfdfd" to="#d8d8da" />
          <Gradient id="green" from="#87f07c" to="#58bd43" />
          <Gradient id="cam" from="#ffffff" to="#c5e6bd" />
          <Gradient id="paper" from="#f8f7f3" to="#e3e1da" />
          <Gradient id="noteTop" from="#fbdb63" to="#f3c031" />
          <Gradient id="store" from="#4fb5ee" to="#2452d6" />
          <Gradient id="settings" from="#d6e2e6" to="#8c8880" />
          <Gradient id="term" from="#c9ced3" to="#6b6e70" />
          <Gradient id="bubble" from="#f2f7f1" to="#d0edc9" />
          <Gradient id="book" from="#b5605a" to="#8d3f3b" />
          <Gradient id="trash" from="#e2e3e4" to="#b9bbbe" />
          <radialGradient id="moon" cx=".7" cy=".7" r=".8"><stop offset="0" stopColor="#c9f6fd" /><stop offset="1" stopColor="#3f7fae" /></radialGradient>
        </defs>
      </svg>
      <App61 open fill="url(#finder)">
        <path d="M34 0 H47 Q61 0 61 14 V47 Q61 61 47 61 H38 Q35 50 35 36 H26 Q25 36 25.500 33 Q27 13 34 0 Z" fill="url(#finderLight)" />
        <path d="M16 18 V23 M44.500 18 V23" stroke="#1b2a40" strokeWidth="2.800" strokeLinecap="round" />
        <path d="M12 41 Q30 57 49 41" fill="none" stroke="#1b2a40" strokeWidth="2.200" strokeLinecap="round" />
      </App61>
      <App61 fill="#c5cad8">
        {pads.map((c, i) => <rect key={c} x={10 + (i % 3) * 15} y={10 + Math.floor(i / 3) * 15} width="11.500" height="11.500" rx="3" fill={c} />)}
      </App61>
      <App61 fill="url(#safari)">
        <circle cx="30.500" cy="30.500" r="26.500" fill="#3c8ae8" />
        <circle cx="30.500" cy="30.500" r="23.500" fill="none" stroke="#dcebfb" strokeWidth="3" strokeDasharray=".8 1.660" />
        <path d="M49 15 L33.500 33.500 L27.500 27.500 Z" fill="#e9493b" />
        <path d="M12 46 L33.500 33.500 L27.500 27.500 Z" fill="#f4f4f4" />
      </App61>
      <App61 fill="url(#green)">
        <rect x="9.500" y="17.500" width="29" height="27" rx="7" fill="url(#cam)" />
        <path d="M41 28 L49.500 19.500 Q52 18 52 21 V41 Q52 43.500 49.500 42 L41 34 Z" fill="url(#cam)" />
      </App61>
      <App61>
        {['#2f78ee', '#e8473b', '#ef9a34'].map((c, i) => (
          <g key={c}>
            <circle cx="12" cy={15.500 + i * 15.300} r="4.900" fill="#fff" stroke={c} strokeWidth="1.400" />
            <circle cx="12" cy={15.500 + i * 15.300} r="3.300" fill={c} />
            <path d={`M23 ${15.500 + i * 15.300} H54`} stroke="#b9b9bb" strokeWidth="1.300" />
          </g>
        ))}
      </App61>
      <App61 open fill="url(#paper)">
        <path d="M0 16 V14 Q0 0 14 0 H47 Q61 0 61 14 V16 Z" fill="url(#noteTop)" />
        <path d="M2 18.500 H60" stroke="#bdbbb5" strokeWidth="1.500" strokeDasharray="1 1.500" />
        <path d="M0 31 H61 M0 46.500 H61" stroke="#cccac4" strokeWidth="1" />
      </App61>
      <App61 open fill="url(#store)">
        <g stroke="#fff" strokeWidth="4.600" strokeLinecap="round">
          <path d="M33.500 14 L21 36 M27.500 14 L46 47 M11.500 38 H34 M43 38 H49.500 M16 44 L14.500 47" />
        </g>
      </App61>
      <App61 open fill="url(#settings)" badge="1">
        <circle cx="30.500" cy="30.500" r="26.500" fill="#2e2e2e" />
        <circle cx="30.500" cy="30.500" r="23.500" fill="none" stroke="#8e8e8e" strokeWidth="2.500" strokeDasharray="1.400 1.300" />
        <circle cx="30.500" cy="30.500" r="18.500" fill="#4a4a4a" stroke="#b2b0ab" strokeWidth="3" />
        <circle cx="30.500" cy="30.500" r="8.500" fill="#3a3a3a" stroke="#a5a39e" strokeWidth="2" />
        <path d="M30.500 30.500 H49 M30.500 30.500 L21 14.500 M30.500 30.500 L21 46.500" stroke="#b2b0ab" strokeWidth="3" />
      </App61>
      <DockDivider className="ml-[18px]" />
      <div className="ml-[16px] flex w-[80px] shrink-0 flex-col items-center">
        <svg viewBox="0 0 76 76" className="-mt-[8px] -mb-[7px] h-[76px] w-[76px] max-w-none overflow-hidden">
          <defs><clipPath id="disc"><circle cx="38" cy="38" r="37" /></clipPath></defs>
          <circle cx="38" cy="38" r="34.500" fill="#fff" stroke="#74b63c" strokeWidth="5" />
          <g clipPath="url(#disc)">
            <path d="M10 22 L22 19 L27 40 Q29.500 47.500 36 46 Q43.500 43.500 42 36 L38 18 L50 15 L56 39 Q58 46 65 44.500 L76 42 L73 55 Q57 58 51.500 50 Q46 57 39 57 Q35.500 57 32 55 L37 77 H24 Z" fill="#74b63c" />
          </g>
        </svg>
        <span className="mt-[10px] h-[8px] w-[8px] rounded-full bg-black" />
      </div>
      <App61 open fill="url(#term)">
        <rect x="2" y="2" width="57" height="57" rx="12" fill="#0c0c0c" />
        <rect x="5" y="6" width="51" height="49" rx="9" fill="#232323" />
        <text x="9" y="23" fontSize="16" fontWeight="700" fill="#fff" className="font-['Liberation_Mono']">&gt;_</text>
      </App61>
      <App61 open fill="#050505">
        <path d="M30.500 9 L49 20 V41 L30.500 52 L12.500 41 V20 Z" fill="#5e5e5e" />
        <path d="M30.500 9 L49 20 H12.500 Z" fill="#7b7b7b" />
        <path d="M12.500 20 L30.500 31 V52 L12.500 41 Z" fill="#8a8a8a" />
        <path d="M12.500 41 L30.500 31 V52 Z" fill="#4a4a4a" />
        <path d="M12.500 20 H49 L30.500 52 V31 Z" fill="#f3f3f3" />
      </App61>
      <App61 open fill="#f07845">
        <circle cx="45" cy="16" r="4.800" fill="#fff" />
        <path d="M40 20 L46 24 Q42 36 27 40 L18 48 L16 49 L11 49 L15 46 L23 37 Q27 25 40 20 Z" fill="#fff" />
        <path d="M41 22 L26 38 M44 25 L30 38 M17 47 L24 40 M42 15 L48 17" stroke="#f07845" strokeWidth="1.300" />
      </App61>
      <App61 open fill="url(#moon)">
        <path d="M0 47 Q14 42 30 50 Q50 50 55 54 L60 52 Q58 61 47 61 H14 Q0 61 0 47 Z" fill="#050505" />
        <circle cx="22" cy="10" r="7" fill="#050505" />
        <path d="M14 16 Q20 13 26 20 L29 29 L35 27 L41 18 L44 20 L37 32 L30 35 L27 36 L29 40 L36 33 L42 52 L48 54 L46 57 L37 54 L33 44 L27 52 L16 54 Q7 50 6 40 Q5 24 14 16 Z" fill="#050505" />
      </App61>
      <App61 open fill="url(#green)">
        <path d="M30.500 11 C43 11 53 19 53 30 C53 41 43 48 30.500 48 C27 48 24 47.500 21.500 46.500 Q20 50.500 16 51 Q18 48 17 44 C11 41 8 36 8 30 C8 19 18 11 30.500 11 Z" fill="url(#bubble)" />
      </App61>
      <App61 open fill="#f7f7f7">
        <g transform="translate(-1.300 -1.300) scale(1.325)">
          <path d="M6.680 14 A20 20 0 0 1 41.320 14 L24 14 L15.340 29 Z" fill="#dc4437" />
          <path d="M6.680 14 A20 20 0 0 0 24 44 L32.660 29 H15.340 Z" fill="#3f9a51" />
          <path d="M41.320 14 A20 20 0 0 1 24 44 L32.660 29 L24 14 Z" fill="#f5c042" />
          <circle cx="24" cy="24" r="10" fill="#fff" />
          <circle cx="24" cy="24" r="8" fill="#3a74e4" />
        </g>
      </App61>
      <App61 open>
        <path d="M12 12 H49 V31 Q49 43 30.500 51 Q12 43 12 31 Z" fill="#4f9df0" />
        <path d="M35 22 A9.500 9.500 0 1 0 39.500 33" fill="none" stroke="#1f5fc8" strokeWidth="2.600" />
        <path d="M27 38 A10 10 0 0 0 38 25" fill="none" stroke="#183f95" strokeWidth="2.400" />
        <path d="M25 23 Q34 18 38.500 27" fill="none" stroke="#e8504a" strokeWidth="2.200" />
        <path d="M25 34 Q21 29 26 24" fill="none" stroke="#e9dd62" strokeWidth="1.600" />
      </App61>
      <App61 open fill="url(#green)">
        <g transform="translate(2.500 1.500)"><FaWhatsapp size={57} color="#fff" /></g>
      </App61>
      <App61 open fill="url(#book)">
        <path d="M2 57 L8 60 L13 59 L15 66 L10 63 L6 66 Z" fill="#e0503f" />
        <path d="M5 6 V54" stroke="#7b2f2d" strokeWidth="1.500" />
        <text x="32" y="39" fontSize="29" textAnchor="middle" fill="#fff" textLength="38" lengthAdjust="spacingAndGlyphs" className="font-['Liberation_Serif']">Aa</text>
      </App61>
      <DockDivider className="ml-[17px]" />
      <svg viewBox="0 0 36 72" className="-mt-[5px] ml-[40px] h-[72px] w-[36px] shrink-0">
        <rect x="0" y="0" width="34" height="62" fill="#14222c" />
        <rect x="12" y="1" width="22" height="64" fill="#f0f1f3" />
        <rect x="1" y="8" width="32" height="64" fill="#fafafa" />
        <path d="M5 13 H10 M22 13 H28 M5 20 H29 M5 26 H10 M23 26 H28 M5 31 H10 M23 31 H28 M18 40 H29 M5 49 H17 M5 57 H26 M5 60 H28 M5 64 H22" stroke="#c4c6ca" strokeWidth="1.300" />
        <path d="M12 17 H20" stroke="#4a78d6" strokeWidth="2" />
      </svg>
      <svg viewBox="0 0 56 72" className="-mt-[6px] ml-[33px] h-[72px] w-[56px] shrink-0">
        <path d="M3 12 L10 5 L18 9 L24 2 L33 9 L38 1 L45 8 L53 12 L48 20 H8 Z" fill="#e9eaec" />
        <path d="M14 8 L22 14 M32 5 L38 13 M42 8 L36 15" stroke="#44484c" strokeWidth="2.500" />
        <path d="M17 12 L23 9 M22 15 L26 12" stroke="#3d9fd8" strokeWidth="2" />
        <path d="M1 12 Q28 22 55 12 L48 66 Q46 72 28 72 Q10 72 8 66 Z" fill="url(#trash)" />
        <path d="M3 14 Q28 23 53 14 M12 30 L22 52 M44 26 L36 44" fill="none" stroke="#f3f3f4" strokeWidth="1.800" />
      </svg>
    </div>
  );
}

export default function App() {
  return (
    <div className="flex h-[1912px] w-[2940px] flex-col overflow-hidden bg-linear-to-b from-[#22375f] from-5% via-[#07111f] via-94% to-[#101b3a] font-['Inter',sans-serif]">
      <MenuBar />
      <div className="mt-[2px] flex h-[1726px] w-[2940px] shrink-0 flex-col overflow-hidden rounded-[20px]">
        <TabStrip />
        <Toolbar />
        <Portal />
      </div>
      <Dock />
    </div>
  );
}
